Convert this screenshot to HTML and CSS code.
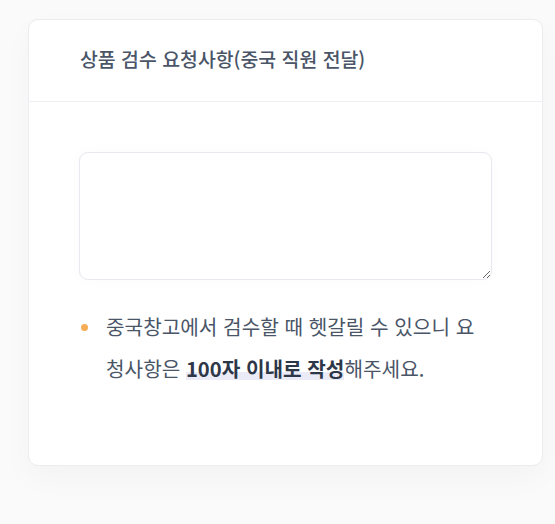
FILE: index.html
```html
<!DOCTYPE html>
<html lang="ko">
<head>
<meta charset="utf-8">
<link rel="stylesheet" href="styles.css">
</head>
<body>
<section class="card">
  <header class="card-head">
    <h2 class="card-title">상품 검수 요청사항(중국 직원 전달)</h2>
  </header>
  <div class="card-body">
    <textarea class="request"></textarea>
    <ul class="notes">
      <li class="note">중국창고에서 검수할 때 헷갈릴 수 있으니 요청사항은 <strong class="mark">100자 이내로 작성</strong>해주세요.</li>
    </ul>
  </div>
</section>
</body>
</html>
```

FILE: styles.css
```css
* { box-sizing: border-box; }
html, body { margin: 0; }
body {
  background: #fafafa;
  padding: 19px 12px 0 28px;
  font-family: "Noto Sans CJK KR", "Noto Sans", sans-serif;
  width: 555px;
  height: 524px;
  overflow: hidden;
}
.card {
  width: 515px;
  height: 447px;
  background: #fff;
  border: 1px solid #ebebf0;
  border-radius: 10px;
  box-shadow: 0 12px 30px rgba(0, 0, 0, 0.03);
}
.card-head {
  height: 82px;
  border-bottom: 1px solid #efeff3;
  padding: 0 51px;
  display: flex;
  align-items: center;
}
.card-title {
  margin: 0;
  margin-top: -3px;
  font-size: 19.4px;
  line-height: 26px;
  font-weight: 500;
  color: #4a5568;
}
.card-body {
  padding: 50px 51px 0 50px;
}
.request {
  display: block;
  width: 413px;
  height: 128px;
  border: 1px solid #e8e8ee;
  border-radius: 9px;
  background: #fff;
  box-shadow: 0 0 12px rgba(0, 0, 0, 0.025);
  resize: vertical;
  outline: none;
}
.notes {
  list-style: none;
  margin: 26px 0 0 0;
  padding: 0;
}
.note {
  position: relative;
  padding-left: 27px;
  font-size: 20.2px;
  line-height: 42px;
  color: #4a5568;
}
.note::before {
  content: "";
  position: absolute;
  left: 2px;
  top: 18px;
  width: 7px;
  height: 7px;
  border-radius: 50%;
  background: #f6ad55;
}
.mark {
  font-weight: 700;
  color: #2d3748;
  background: linear-gradient(transparent 62%, #ebebf8 62%, #ebebf8 90%, transparent 90%);
}
```
